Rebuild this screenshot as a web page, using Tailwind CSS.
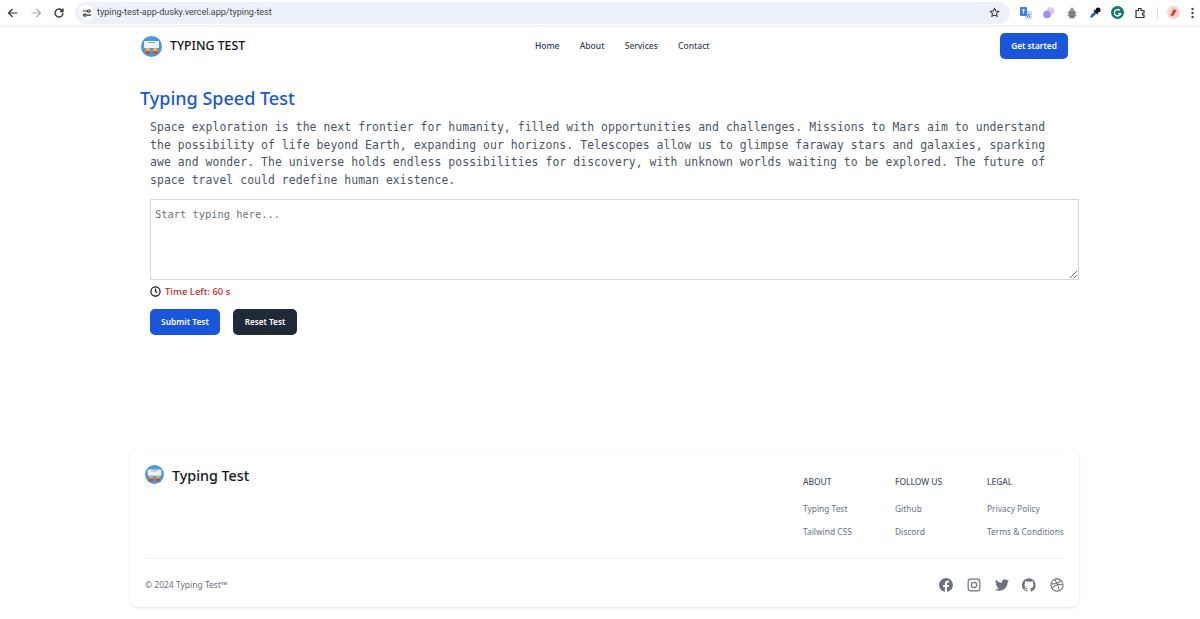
<!DOCTYPE html>
<html lang="en">
<head>
  <meta charset="UTF-8" />
  <title>Typing Test</title>
  <script src="https://cdn.jsdelivr.net/npm/@tailwindcss/browser@4"></script>
</head>
<body class="bg-white h-[619px] overflow-hidden font-['Noto_Sans',sans-serif]">

  <!-- browser toolbar -->
  <div class="h-[27px] bg-white border-b-2 border-[#f3f3f3] flex items-center text-[#444]">
    <div class="flex items-center w-[75px] pl-[7px] gap-[11px] h-full">
      <svg class="w-3 h-3" viewBox="0 0 24 24" fill="none" stroke="#333" stroke-width="2.4"><path d="M21 12H4M11 4l-8 8 8 8"/></svg>
      <svg class="w-3 h-3" viewBox="0 0 24 24" fill="none" stroke="#aaa" stroke-width="2.4"><path d="M3 12h17M13 4l8 8-8 8"/></svg>
      <svg class="w-3 h-3" viewBox="0 0 24 24" fill="none" stroke="#333" stroke-width="2.6"><path d="M20 12a8 8 0 1 1-2.500-5.800L20 9M20 3v6h-6"/></svg>
    </div>
    <div class="w-[935px] h-[22px] rounded-full bg-[#edf2fa] flex items-center pl-[4px] pr-[10px]">
      <span class="w-[15px] h-[15px] bg-white rounded-full flex items-center justify-center">
        <svg class="w-[10px] h-[10px]" viewBox="0 0 24 24" fill="none" stroke="#333" stroke-width="2.6"><path d="M2 7h11M20 7h2M2 17h2M11 17h11"/><circle cx="16" cy="7" r="3"/><circle cx="7" cy="17" r="3"/></svg>
      </span>
      <span class="ml-[3px] text-[9px] text-[#444] font-['Roboto',sans-serif]">typing-test-app-dusky.vercel.app/typing-test</span>
      <svg class="w-[11px] h-[11px] ml-auto" viewBox="0 0 24 24" fill="none" stroke="#333" stroke-width="2.2"><path d="M12 3l2.800 5.900 6.400.8-4.700 4.400 1.200 6.400L12 17.400l-5.700 3.100 1.200-6.400-4.700-4.400 6.400-.8z"/></svg>
    </div>
    <div class="flex items-center h-full">
      <svg class="ml-[10px] w-[12px] h-[12px]" viewBox="0 0 12 12"><rect x="5" y="4" width="7" height="8" rx="1" fill="#d3d8e0"/><rect x="0" y="0" width="7" height="9" rx="1" fill="#3d7fe6"/><path d="M2 3h3M3.500 2.500v4" stroke="#fff"/><path d="M7 7l3 3M10 7l-3 3" stroke="#3d7fe6"/></svg>
      <svg class="ml-[11px] w-[12px] h-[12px]" viewBox="0 0 12 12"><circle cx="7.500" cy="4" r="3.800" fill="#e3c3f3"/><circle cx="4" cy="7.500" r="3.800" fill="#a18ff2"/></svg>
      <svg class="ml-[11px] w-[12px] h-[12px]" viewBox="0 0 12 12"><ellipse cx="6" cy="7" rx="3.500" ry="4.500" fill="#7d7d7d"/><circle cx="6" cy="2.400" r="1.800" fill="#9a9a9a"/><path d="M1 5l2 1M11 5L9 6M1 9l2-1M11 9L9 8" stroke="#999"/></svg>
      <svg class="ml-[11px] w-[12px] h-[12px]" viewBox="0 0 12 12"><path d="M1 11l1-3 4-4 2 2-4 4z" fill="#2a5fc0"/><circle cx="9" cy="3" r="2.500" fill="#111"/><path d="M5 3l4 4" stroke="#111" stroke-width="1.500"/></svg>
      <svg class="ml-[10px] w-[13px] h-[13px]" viewBox="0 0 12 12"><circle cx="6" cy="6" r="6" fill="#10776a"/><path d="M8.300 4.200A3 3 0 1 0 9 7H6.500" fill="none" stroke="#fff" stroke-width="1.300"/></svg>
      <svg class="ml-[10px] w-[12px] h-[12px]" viewBox="0 0 24 24" fill="none" stroke="#333" stroke-width="2.400"><path d="M4 7h5V3h5v4h6v5h-3v4h3v5H4z"/></svg>
      <span class="ml-[11px] w-px h-[12px] bg-[#c8e0f5]"></span>
      <svg class="ml-[9px] w-[13px] h-[13px]" viewBox="0 0 12 12"><circle cx="6" cy="6" r="6" fill="#f6d5cf"/><path d="M3 9l3-6 3 1-3 5z" fill="#d9412c"/></svg>
      <svg class="ml-[11px] w-[3px] h-[12px]" viewBox="0 0 3 12" fill="#444"><circle cx="1.500" cy="2" r="1.200"/><circle cx="1.500" cy="6" r="1.200"/><circle cx="1.500" cy="10" r="1.200"/></svg>
    </div>
  </div>

  <!-- site nav -->
  <nav class="w-[950px] ml-[130px] h-[38px] flex items-center pl-[11px] pr-[12px] relative">
    <svg class="w-[21px] h-[21px]" viewBox="0 0 21 21"><use href="#logo"/></svg>
    <span class="ml-2 text-[12.300px] font-medium text-[#111]">TYPING TEST</span>
    <ul class="absolute left-[405px] top-0 h-full flex items-center gap-[20.300px] text-[8.500px] font-medium text-[#374151]">
      <li class="text-[#1e3a6e]">Home</li><li>About</li><li>Services</li><li>Contact</li>
    </ul>
    <button class="ml-auto w-[68px] h-[26px] rounded-[5px] bg-[#1a56db] text-white text-[8.300px] font-semibold">Get started</button>
  </nav>

  <main class="w-[950px] ml-[130px] pl-[10px]">
    <h1 class="mt-[19px] text-[18px] leading-[28px] font-medium text-[#1a56db]">Typing Speed Test</h1>
    <div class="pl-[10px]">
      <p class="mt-[7px] font-['DejaVu_Sans_Mono',monospace] text-[11.430px] tracking-[0.062px] leading-[17.700px] text-[#4b5563] whitespace-pre-line">Space exploration is the next frontier for humanity, filled with opportunities and challenges. Missions to Mars aim to understand
the possibility of life beyond Earth, expanding our horizons. Telescopes allow us to glimpse faraway stars and galaxies, sparking
awe and wonder. The universe holds endless possibilities for discovery, with unknown worlds waiting to be explored. The future of
space travel could redefine human existence.</p>
      <textarea class="mt-[9px] block w-[929px] h-[81px] border border-[#d1d5db] px-[4px] py-[7px] font-['DejaVu_Sans_Mono',monospace] text-[10.400px] placeholder:text-[#6b7280]" placeholder="Start typing here..."></textarea>
      <div class="mt-[6px] h-[12px] flex items-center">
        <svg class="w-[11px] h-[11px]" viewBox="0 0 24 24" fill="none" stroke="#111" stroke-width="2.600"><circle cx="12" cy="12" r="10"/><path d="M12 6v6l4 2"/></svg>
        <span class="ml-[4px] text-[9.500px] font-medium text-[#c81e1e]">Time Left: 60 s</span>
      </div>
      <div class="mt-[11px] flex gap-[13px]">
        <button class="w-[70px] h-[26px] rounded-[5px] bg-[#1a56db] text-white text-[8.400px] font-semibold">Submit Test</button>
        <button class="w-[64px] h-[26px] rounded-[5px] bg-[#1f2937] text-white text-[8.200px] font-semibold">Reset Test</button>
      </div>
    </div>
  </main>

  <footer class="w-[949px] h-[158px] ml-[130px] mt-[114px] rounded-lg shadow-[0_1px_3px_rgba(0,0,0,0.12)] px-[15px] pt-[15px]">
    <div class="h-[94px] flex justify-between">
      <div class="flex items-start">
        <svg class="w-[19px] h-[19px] mt-[1px]" viewBox="0 0 21 21"><use href="#logo"/></svg>
        <span class="ml-[8px] mt-[1px] text-[14.300px] leading-[22px] font-medium text-[#111827]">Typing Test</span>
      </div>
      <div class="flex pt-[12px] text-[8.400px] text-[#6b7280]">
        <div class="w-[92px]">
          <h2 class="font-medium text-[#4b5563] leading-[12px] mb-[15px]">ABOUT</h2>
          <p class="leading-[12px] mb-[11px]">Typing Test</p>
          <p class="leading-[12px]">Tailwind CSS</p>
        </div>
        <div class="w-[92px]">
          <h2 class="font-medium text-[#4b5563] leading-[12px] mb-[15px]">FOLLOW US</h2>
          <p class="leading-[12px] mb-[11px]">Github</p>
          <p class="leading-[12px]">Discord</p>
        </div>
        <div class="w-[77px] whitespace-nowrap">
          <h2 class="font-medium text-[#4b5563] leading-[12px] mb-[15px]">LEGAL</h2>
          <p class="leading-[12px] mb-[11px]">Privacy Policy</p>
          <p class="leading-[12px]">Terms &amp; Conditions</p>
        </div>
      </div>
    </div>
    <div class="border-t border-[#eceef1] pt-[20px] flex justify-between items-center">
      <span class="text-[8.500px] text-[#6b7280]">© 2024 Typing Test™</span>
      <div class="flex items-center gap-[13.750px] text-[#6b7280] -mt-[1px]">
        <svg class="w-[14px] h-[14px]" viewBox="0 0 24 24" fill="currentColor"><path d="M24 12a12 12 0 1 0-13.900 11.900v-8.400H7.100V12h3V9.400c0-3 1.800-4.700 4.500-4.700 1.300 0 2.700.2 2.700.2v3h-1.500c-1.500 0-2 .9-2 1.900V12h3.400l-.5 3.500h-2.900v8.400A12 12 0 0 0 24 12z"/></svg>
        <svg class="w-[14px] h-[14px]" viewBox="0 0 24 24" fill="none" stroke="currentColor" stroke-width="2"><rect x="2" y="2" width="20" height="20" rx="4"/><circle cx="12" cy="12" r="4.600"/><circle cx="17.600" cy="6.400" r="1" fill="currentColor" stroke="none"/></svg>
        <svg class="w-[14px] h-[14px]" viewBox="0 0 24 24" fill="currentColor"><path d="M24 4.600c-.9.4-1.800.7-2.800.8 1-.6 1.800-1.600 2.200-2.700-1 .6-2 1-3.100 1.200a4.900 4.900 0 0 0-8.400 4.500C7.700 8.200 4.100 6.200 1.700 3.200a4.900 4.900 0 0 0 1.500 6.600c-.8 0-1.600-.2-2.200-.6 0 2.400 1.700 4.500 3.900 5-.7.2-1.500.2-2.200.1.600 2 2.400 3.400 4.600 3.400A9.900 9.900 0 0 1 0 19.500 14 14 0 0 0 7.500 21.700c9.100 0 14.300-7.700 14-14.600 1-.7 1.800-1.600 2.500-2.500z"/></svg>
        <svg class="w-[14px] h-[14px]" viewBox="0 0 24 24" fill="currentColor"><path d="M12 .3a12 12 0 0 0-3.800 23.400c.6.100.8-.3.8-.6v-2.200c-3.300.7-4-1.400-4-1.400-.6-1.400-1.400-1.800-1.400-1.800-1.100-.7.100-.7.100-.7 1.200.1 1.800 1.200 1.800 1.200 1.100 1.800 2.800 1.300 3.500 1 .1-.8.4-1.300.8-1.600-2.700-.3-5.500-1.300-5.500-5.900 0-1.300.5-2.400 1.200-3.200-.1-.3-.5-1.500.1-3.200 0 0 1-.3 3.300 1.200a11.500 11.500 0 0 1 6 0C17.300 4.700 18.300 5 18.300 5c.7 1.700.2 2.900.1 3.200.8.8 1.200 1.900 1.200 3.200 0 4.600-2.800 5.600-5.500 5.900.4.400.8 1.100.8 2.200v3.300c0 .3.2.7.8.6A12 12 0 0 0 12 .3z"/></svg>
        <svg class="w-[14px] h-[14px]" viewBox="0 0 24 24" fill="none" stroke="currentColor" stroke-width="1.800"><circle cx="12" cy="12" r="10.500"/><path d="M8 2.500c3.500 4.500 6.500 11 8 19M2 10c6 .5 12-.5 17-5.500M3.500 18c3.500-5 10-8 18-6.500"/></svg>
      </div>
    </div>
  </footer>

  <!-- shared logo -->
  <svg class="hidden">
    <symbol id="logo" viewBox="0 0 21 21">
      <circle cx="10.500" cy="10.500" r="10.500" fill="#4a9bd8"/>
      <rect x="3" y="5" width="15" height="7" rx="1" fill="#eef2f4"/>
      <rect x="7" y="6" width="7" height="1" fill="#8aa0b0"/>
      <path d="M5 12h3.500l.5 3H4.500zM12.500 12H16l.5 3h-4.500z" fill="#f0b34a"/>
      <path d="M4.500 15H9v3H4.500zM12 15h4.500v3H12z" fill="#d6482f"/>
    </symbol>
  </svg>

</body>
</html>
